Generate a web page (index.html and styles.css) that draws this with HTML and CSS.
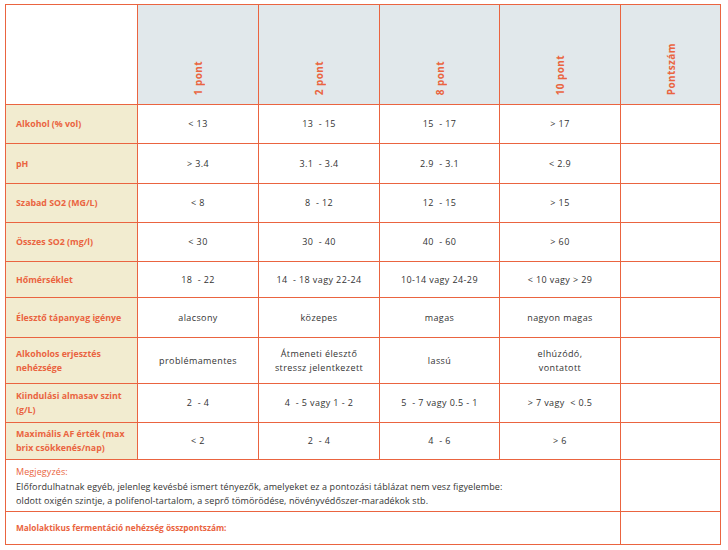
FILE: index.html
```html
<!DOCTYPE html>
<html lang="hu">
<head>
<meta charset="utf-8">
<title>Pontozási táblázat</title>
<link rel="stylesheet" href="styles.css">
</head>
<body>
<table class="score">
  <colgroup>
    <col class="c-label">
    <col class="c-val">
    <col class="c-val">
    <col class="c-val2">
    <col class="c-val">
    <col class="c-sum">
  </colgroup>
  <thead>
    <tr class="r-head">
      <th class="blank"></th>
      <th class="hd"><span class="rot">1 pont</span></th>
      <th class="hd"><span class="rot">2 pont</span></th>
      <th class="hd"><span class="rot">8 pont</span></th>
      <th class="hd"><span class="rot">10 pont</span></th>
      <th class="hd"><span class="rot">Pontszám</span></th>
    </tr>
  </thead>
  <tbody>
    <tr class="h39"><th class="lbl">Alkohol (% vol)</th><td>&lt; 13</td><td>13 &nbsp;- 15</td><td>15 &nbsp;- 17</td><td>&gt; 17</td><td></td></tr>
    <tr class="h40"><th class="lbl">pH</th><td>&gt; 3.4</td><td>3.1 &nbsp;- 3.4</td><td>2.9 &nbsp;- 3.1</td><td>&lt; 2.9</td><td></td></tr>
    <tr class="h39"><th class="lbl">Szabad SO2 (MG/L)</th><td>&lt; 8</td><td>8 &nbsp;- 12</td><td>12 &nbsp;- 15</td><td>&gt; 15</td><td></td></tr>
    <tr class="h39"><th class="lbl">Összes SO2 (mg/l)</th><td>&lt; 30</td><td>30 &nbsp;- 40</td><td>40 &nbsp;- 60</td><td>&gt; 60</td><td></td></tr>
    <tr class="h36"><th class="lbl">Hőmérséklet</th><td>18 &nbsp;- 22</td><td>14 &nbsp;- 18 vagy 22-24</td><td>10-14 vagy 24-29</td><td>&lt; 10 vagy &gt; 29</td><td></td></tr>
    <tr class="h40"><th class="lbl">Élesztő tápanyag igénye</th><td>alacsony</td><td>közepes</td><td>magas</td><td>nagyon magas</td><td></td></tr>
    <tr class="h46"><th class="lbl">Alkoholos erjesztés nehézsége</th><td>problémamentes</td><td>Átmeneti élesztő<br>stressz jelentkezett</td><td>lassú</td><td>elhúzódó,<br>vontatott</td><td></td></tr>
    <tr class="h39"><th class="lbl">Kiindulási almasav szint (g/L)</th><td>2 &nbsp;- 4</td><td>4 &nbsp;- 5 vagy 1 - 2</td><td>5 &nbsp;- 7 vagy 0.5 - 1</td><td>&gt; 7 vagy &nbsp;&lt; 0.5</td><td></td></tr>
    <tr class="h37"><th class="lbl">Maximális AF érték (max brix csökkenés/nap)</th><td>&lt; 2</td><td>2 &nbsp;- 4</td><td>4 &nbsp;- 6</td><td>&gt; 6</td><td></td></tr>
    <tr class="h52">
      <td class="note" colspan="5">
        <div class="note-title">Megjegyzés:</div>
        <div class="note-text">Előfordulhatnak egyéb, jelenleg kevésbé ismert tényezők, amelyeket ez a pontozási táblázat nem vesz figyelembe:<br>oldott oxigén szintje, a polifenol-tartalom, a seprő tömörödése, növényvédőszer-maradékok stb.</div>
      </td>
      <td></td>
    </tr>
    <tr class="h33">
      <td class="total" colspan="5">Malolaktikus fermentáció nehézség összpontszám:</td>
      <td></td>
    </tr>
  </tbody>
</table>
</body>
</html>
```

FILE: styles.css
```css
html, body {
  margin: 0;
  padding: 0;
  background: #ffffff;
}
body {
  padding: 4px 0 0 5px;
  font-family: "Open Sans", "Noto Sans", sans-serif;
  color: #333333;
}
.score {
  border-collapse: collapse;
  table-layout: fixed;
  width: 716px;
}
.c-label { width: 132px; }
.c-val { width: 121px; }
.c-val2 { width: 120px; }
.c-sum { width: 100px; }
.score th,
.score td {
  border: 1px solid #ea6440;
  padding: 0;
  font-size: 9px;
  letter-spacing: 0.4px;
  line-height: 14px;
  text-align: center;
  vertical-align: middle;
  font-weight: 400;
}
.r-head { height: 100px; }
.h33 { height: 33px; }
.h36 { height: 36px; }
.h37 { height: 37px; }
.h39 { height: 39px; }
.h40 { height: 40px; }
.h46 { height: 46px; }
.h52 { height: 52px; }
.score th.blank { background: #ffffff; }
.score th.hd {
  background: #e1e8eb;
  vertical-align: bottom;
  padding-bottom: 5px;
}
.rot {
  display: inline-block;
  writing-mode: vertical-rl;
  transform: rotate(180deg);
  color: #ea6440;
  font-weight: 700;
  font-size: 10px;
  line-height: 12px;
  letter-spacing: 0.4px;
}
.score th.lbl {
  background: #f2ecd0;
  color: #ea6440;
  font-weight: 700;
  font-size: 8.8px;
  letter-spacing: 0;
  text-align: left;
  padding: 0 6px 0 10px;
  line-height: 14px;
}
.score td.note {
  text-align: left;
  padding: 3px 10px 0 10px;
  line-height: 14.5px;
  letter-spacing: 0.1px;
}
.note-title {
  color: #ea6440;
  font-weight: 400;
}
.score td.total {
  text-align: left;
  padding: 0 10px;
  color: #ea6440;
  font-weight: 700;
  font-size: 8.3px;
  letter-spacing: 0;
}
```
